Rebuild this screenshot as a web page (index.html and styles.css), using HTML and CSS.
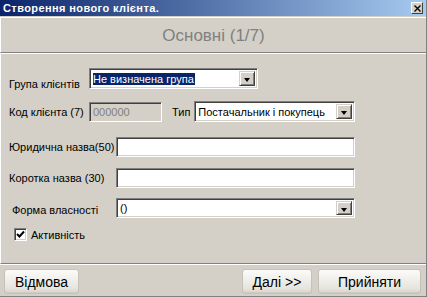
FILE: index.html
```html
<!DOCTYPE html>
<html lang="uk">
<head>
  <meta charset="UTF-8">
  <title>Створення нового клієнта.</title>
  <link rel="stylesheet" href="styles.css">
</head>
<body>
  <div class="window">
    <div class="titlebar">
      <span class="title">Створення нового клієнта.</span>
      <span class="close">
        <svg width="7" height="7" viewBox="0 0 7 7"><path d="M0.5 0.5 L6.5 6.5 M6.5 0.5 L0.5 6.5" stroke="#000" stroke-width="1.3"/></svg>
      </span>
    </div>

    <div class="header">Основні (1/7)</div>

    <div class="form">
      <div class="row row-group">
        <label class="label label-low">Група клієнтів</label>
        <div class="field combo combo-group">
          <span class="combo-text"><span class="selected">Не визначена група</span></span>
          <span class="combo-btn"></span>
        </div>
      </div>

      <div class="row row-code">
        <label class="label">Код клієнта (7)</label>
        <div class="field field-disabled code">000000</div>
        <label class="label label-type">Тип</label>
        <div class="field combo combo-type">
          <span class="combo-text">Постачальник і покупець</span>
          <span class="combo-btn"></span>
        </div>
      </div>

      <div class="row row-legal">
        <label class="label label-wide">Юридична назва(50)</label>
        <div class="field field-long"></div>
      </div>

      <div class="row row-short">
        <label class="label label-wide">Коротка назва (30)</label>
        <div class="field field-long"></div>
      </div>

      <div class="row row-form">
        <label class="label label-wide label-form">Форма власності</label>
        <div class="field combo field-long">
          <span class="combo-text">()</span>
          <span class="combo-btn"></span>
        </div>
      </div>

      <div class="row row-check">
        <span class="checkbox">
          <svg width="9" height="9" viewBox="0 0 9 9"><path d="M1 4 L3.5 6.5 L8 1.5" fill="none" stroke="#000" stroke-width="2"/></svg>
        </span>
        <span class="check-label">Активність</span>
      </div>
    </div>

    <div class="footer">
      <button class="btn btn-cancel" type="button">Відмова</button>
      <div class="footer-right">
        <button class="btn btn-next" type="button">Далі &gt;&gt;</button>
        <button class="btn btn-ok" type="button">Прийняти</button>
      </div>
    </div>
  </div>
</body>
</html>
```

FILE: styles.css
```css
body {
  margin: 0;
  padding: 0;
  background-color: #d4d0c8;
  font-family: "Liberation Sans", Arial, sans-serif;
  font-size: 11px;
  color: #000;
}

.window {
  width: 427px;
  height: 297px;
  box-sizing: border-box;
  border-right: 1px solid #808080;
  border-bottom: 1px solid #808080;
  background-color: #d4d0c8;
  overflow: hidden;
}

.titlebar {
  height: 16px;
  display: flex;
  align-items: center;
  justify-content: space-between;
  padding: 0 3px 0 3px;
  background: linear-gradient(to right, #0a246a, #a6caf0);
}

.title {
  color: #fff;
  font-weight: bold;
  font-size: 11px;
  letter-spacing: 0.4px;
}

.close {
  width: 10px;
  height: 10px;
  display: flex;
  align-items: center;
  justify-content: center;
  background-color: #d4d0c8;
  border-top: 1px solid #fff;
  border-left: 1px solid #fff;
  border-right: 1px solid #404040;
  border-bottom: 1px solid #404040;
}

.header {
  height: 33px;
  margin-top: 1px;
  border-top: 1px solid #fff;
  border-left: 1px solid #fff;
  border-bottom: 1px solid #808080;
  box-shadow: 0 1px 0 #fff;
  display: flex;
  align-items: center;
  justify-content: center;
  color: #808080;
  font-size: 17px;
  padding-top: 1px;
}

.form {
  height: 210px;
  box-sizing: border-box;
  margin-top: 1px;
  padding-top: 14px;
  border-left: 1px solid #fff;
  border-bottom: 1px solid #808080;
}

.row {
  display: flex;
  align-items: center;
  padding-left: 8px;
}

.row-code { margin-top: 12px; }
.row-legal { margin-top: 15px; }
.row-short { margin-top: 11px; }
.row-form { margin-top: 10px; }
.row-check { margin-top: 10px; padding-left: 13px; }

.label {
  width: 80px;
  white-space: nowrap;
}

.label-low {
  align-self: flex-end;
  margin-bottom: -1px;
}

.label-wide {
  width: 107px;
}

.label-form {
  padding-left: 3px;
  width: 104px;
  padding-top: 3px;
}

.label-type {
  width: auto;
  margin-left: 10px;
  margin-right: 4px;
}

.field {
  height: 20px;
  box-sizing: border-box;
  background-color: #fff;
  border-top: 1px solid #808080;
  border-left: 1px solid #808080;
  border-right: 1px solid #fff;
  border-bottom: 1px solid #fff;
  box-shadow: inset 1px 1px 0 #404040, inset -1px -1px 0 #d4d0c8;
  display: flex;
  align-items: center;
  padding: 2px;
}

.field-disabled {
  background-color: #d4d0c8;
  color: #808080;
  width: 73px;
  padding-left: 3px;
}

.field-long {
  width: 239px;
}

.combo-group {
  width: 169px;
  height: 21px;
}

.combo-type {
  width: 161px;
  height: 21px;
}

.combo-text {
  flex: 1;
  padding-left: 1px;
  white-space: nowrap;
  overflow: hidden;
}

.selected {
  background-color: #0a246a;
  color: #fff;
  padding: 1px 1px 1px 0;
}

.combo-btn {
  width: 16px;
  height: 100%;
  box-sizing: border-box;
  background-color: #d4d0c8;
  border-top: 1px solid #d4d0c8;
  border-left: 1px solid #d4d0c8;
  border-right: 1px solid #404040;
  border-bottom: 1px solid #404040;
  box-shadow: inset 1px 1px 0 #fff, inset -1px -1px 0 #808080;
  position: relative;
}

.combo-btn::after {
  content: "";
  position: absolute;
  left: 4px;
  top: 6px;
  border-left: 3.5px solid transparent;
  border-right: 3.5px solid transparent;
  border-top: 4px solid #000;
}

.checkbox {
  width: 13px;
  height: 13px;
  box-sizing: border-box;
  background-color: #fff;
  border-top: 1px solid #808080;
  border-left: 1px solid #808080;
  border-right: 1px solid #fff;
  border-bottom: 1px solid #fff;
  box-shadow: inset 1px 1px 0 #404040, inset -1px -1px 0 #d4d0c8;
  display: flex;
  align-items: center;
  justify-content: center;
}

.check-label {
  margin-left: 4px;
}

.footer {
  display: flex;
  justify-content: space-between;
  padding: 4px 5px 0 4px;
  border-top: 1px solid #fff;
}

.footer-right {
  display: flex;
  gap: 6px;
}

.btn {
  height: 25px;
  font-family: "Liberation Sans", Arial, sans-serif;
  font-size: 14px;
  color: #000;
  border: 1px solid #c4c1b8;
  border-radius: 3px;
  background: linear-gradient(to bottom, #fbfbf9, #e6e4de 80%, #d6d3cb);
  box-shadow: inset 0 -1px 0 #cfccc4;
  padding: 0;
}

.btn-cancel { width: 75px; }
.btn-next { width: 70px; }
.btn-ok { width: 103px; }
```
